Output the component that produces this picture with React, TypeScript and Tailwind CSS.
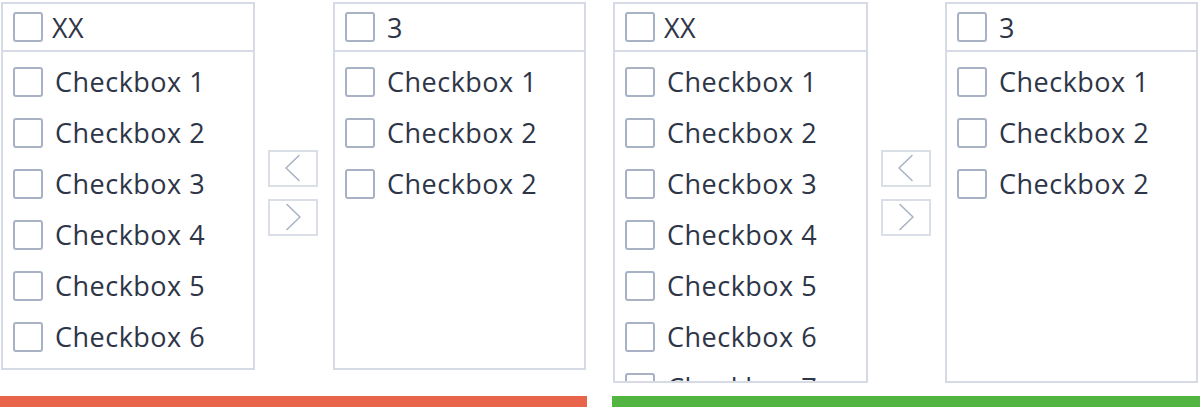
import React from "react";

const font = { fontFamily: '"Open Sans", "Noto Sans", sans-serif' };

function Box() {
  return <span className="block w-[30px] h-[30px] shrink-0 rounded-[3px] border-2 border-[#a8b2c4] bg-white" />;
}

function Panel({
  title,
  titleGap,
  items,
  width,
  height,
}: {
  title: string;
  titleGap: string;
  items: string[];
  width: string;
  height: string;
}) {
  return (
    <div className={`${width} ${height} shrink-0 flex flex-col border-2 border-[#d5dae4] bg-white overflow-hidden`}>
      <div className="h-[48px] shrink-0 flex items-center pl-[10px] border-b-2 border-[#d5dae4]">
        <Box />
        <span className={`${titleGap} text-[27px] leading-none tracking-[0.5px] text-[#2e3547]`}>{title}</span>
      </div>
      <div className="flex-1 overflow-hidden pt-[4px]">
        {items.map((t, i) => (
          <div key={i} className="h-[51px] flex items-center pl-[10px]">
            <Box />
            <span className="ml-[12px] text-[27px] leading-none tracking-[0.5px] text-[#2e3547] whitespace-nowrap">{t}</span>
          </div>
        ))}
      </div>
    </div>
  );
}

function Btn({ dir }: { dir: "l" | "r" }) {
  return (
    <div className="w-[50px] h-[37px] border-2 border-[#dadee6] bg-white flex items-center justify-center">
      <svg width="18" height="28" viewBox="0 0 18 28" fill="none">
        <path
          d={dir === "l" ? "M15 1.5 L2 14 L15 26.5" : "M3 1.5 L16 14 L3 26.5"}
          stroke="#a9b3c5"
          strokeWidth="1.6"
          strokeLinecap="round"
          strokeLinejoin="round"
        />
      </svg>
    </div>
  );
}

function Group({
  firstItems,
  leftH,
  rightH,
  leftW,
  midW,
  bar,
  w,
}: {
  firstItems: string[];
  leftH: string;
  rightH: string;
  leftW: string;
  midW: string;
  bar: string;
  w: string;
}) {
  return (
    <div className={`${w} shrink-0 flex flex-col`}>
      <div className="h-[383px] flex items-start pl-px pt-[2px]">
        <Panel title="XX" titleGap="ml-[9px]" items={firstItems} width={leftW} height={leftH} />
        <div className={`${midW} shrink-0 self-stretch flex flex-col items-center justify-center gap-[12px] pr-[2px]`}>
          <Btn dir="l" />
          <Btn dir="r" />
        </div>
        <Panel
          title="3"
          titleGap="ml-[12px]"
          items={["Checkbox 1", "Checkbox 2", "Checkbox 2"]}
          width="w-[253px]"
          height={rightH}
        />
      </div>
      <div className={`mt-[13px] h-[11px] ${bar}`} />
    </div>
  );
}

export default function App() {
  const six = ["Checkbox 1", "Checkbox 2", "Checkbox 3", "Checkbox 4", "Checkbox 5", "Checkbox 6"];
  const seven = [...six, "Checkbox 7"];
  return (
    <div className="w-[1200px] h-[409px] bg-white flex gap-[25px]" style={font}>
      <Group
        w="w-[587px]"
        firstItems={six}
        leftW="w-[254px]"
        midW="w-[78px]"
        leftH="h-[368px]"
        rightH="h-[368px]"
        bar="bg-[#e8644b]"
      />
      <Group
        w="w-[588px]"
        firstItems={seven}
        leftW="w-[255px]"
        midW="w-[77px]"
        leftH="h-[381px]"
        rightH="h-[381px]"
        bar="bg-[#52b541]"
      />
    </div>
  );
}
